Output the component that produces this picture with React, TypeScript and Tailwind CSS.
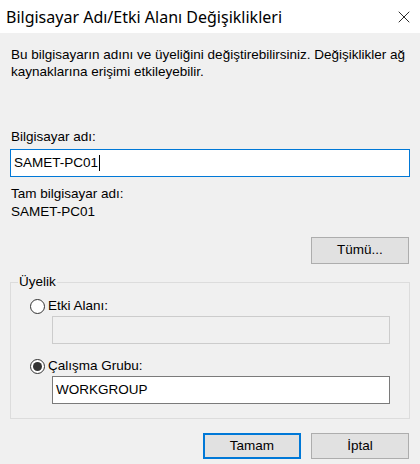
import { X } from "lucide-react";

const font = { fontFamily: '"Liberation Sans", Arial, sans-serif' };

const Radio = ({ checked, label }: { checked: boolean; label: string }) => (
  <div className="flex items-center h-[17px]">
    <div className="w-[15px] h-[15px] rounded-full border border-[#333] bg-white flex items-center justify-center">
      {checked && <div className="w-[9px] h-[9px] rounded-full bg-[#333]" />}
    </div>
    <span className="ml-[3px] text-[13.5px] text-black">{label}</span>
  </div>
);

export default function App() {
  return (
    <div className="w-[420px] h-[464px] bg-[#f0f0f0] flex flex-col overflow-hidden" style={font}>
      <div className="h-[33px] bg-white flex items-center justify-between pl-[6px] pr-[6px]">
        <span className="text-[16px] text-black" style={{ fontFamily: '"Noto Sans", "Open Sans", sans-serif' }}>
          Bilgisayar Adı/Etki Alanı Değişiklikleri
        </span>
        <X className="w-[20px] h-[20px] text-black" strokeWidth={1} />
      </div>

      <div className="px-[11px] pt-[13px] text-[13.5px] leading-[17px] text-black">
        Bu bilgisayarın adını ve üyeliğini değiştirebilirsiniz. Değişiklikler ağ kaynaklarına erişimi etkileyebilir.
      </div>

      <div className="px-[10px] mt-[48px]">
        <div className="pl-[1px] text-[13.5px] leading-[17px] text-black">Bilgisayar adı:</div>
        <div className="mt-[4px] h-[28px] border border-[#0078d7] bg-white flex items-center px-[3px] text-[13.5px] text-black">
          SAMET-PC01<span className="ml-[1px] w-[1px] h-[16px] bg-black" />
        </div>
        <div className="mt-[8px] pl-[1px] text-[13.5px] leading-[17px] text-black">Tam bilgisayar adı:</div>
        <div className="mt-[1px] pl-[1px] text-[13.5px] leading-[17px] text-black">SAMET-PC01</div>
        <div className="mt-[17px] flex justify-end pr-[1px]">
          <button className="w-[98px] h-[27px] border border-[#adadad] bg-[#e1e1e1] text-[13.5px] text-black">Tümü...</button>
        </div>
      </div>

      <div className="mx-[10px] mt-[18px] relative border border-[#dcdcdc] h-[137px] w-[400px]">
        <span className="absolute left-[7px] -top-[10px] bg-[#f0f0f0] px-[1px] text-[13.5px] leading-[17px] text-black">Üyelik</span>
        <div className="pl-[19px] pt-[15px]">
          <Radio checked={false} label="Etki Alanı:" />
          <div className="ml-[22px] mt-[1px] w-[338px] h-[28px] border border-[#cccccc] bg-[#f0f0f0]" />
          <div className="mt-[14px]">
            <Radio checked={true} label="Çalışma Grubu:" />
          </div>
          <div className="ml-[22px] mt-[1px] w-[338px] h-[28px] border border-[#7a7a7a] bg-white flex items-center px-[3px] text-[13.5px] text-black">
            WORKGROUP
          </div>
        </div>
      </div>

      <div className="mt-[14px] flex justify-end gap-[10px] pr-[11px]">
        <button className="w-[98px] h-[26px] border-2 border-[#0078d7] bg-[#e1e1e1] text-[13.5px] text-black">Tamam</button>
        <button className="w-[98px] h-[26px] border border-[#adadad] bg-[#e1e1e1] text-[13.5px] text-black">İptal</button>
      </div>
    </div>
  );
}
